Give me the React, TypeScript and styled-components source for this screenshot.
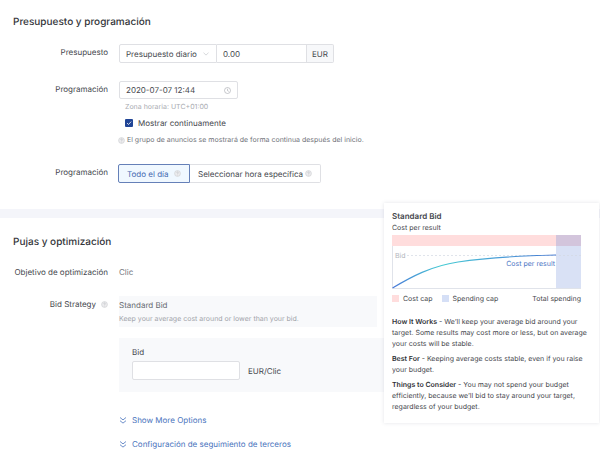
import React from "react";
import styled, { createGlobalStyle } from "styled-components";

const GlobalStyle = createGlobalStyle`
  * { box-sizing: border-box; }
  body {
    margin: 0;
    background: #fff;
    color: #45474d;
    font-family: Inter, "Noto Sans", sans-serif;
    font-size: 8px;
    line-height: 12px;
    text-rendering: geometricPrecision;
  }
  button, input, select { font: inherit; color: inherit; text-rendering: inherit; }
  h2, h3, p { margin: 0; }
`;

const Page = styled.main`
  position: relative;
`;

const Section = styled.section<{ $divided?: boolean }>`
  padding: ${(p) => (p.$divided ? "14px 0 26px" : "16px 0 7px")};
  border-bottom: ${(p) => (p.$divided ? "9px solid #f4f5fa" : "0")};
`;

const Heading = styled.h2`
  margin-left: 13px;
  font-size: 10px;
  line-height: 16px;
  font-weight: 500;
  color: #333539;
`;

const Row = styled.div<{ $gap: number }>`
  display: grid;
  grid-template-columns: 108px minmax(0, 1fr);
  column-gap: 11px;
  margin-top: ${(p) => p.$gap}px;
`;

const Label = styled.label<{ $inset?: boolean }>`
  display: flex;
  justify-content: flex-end;
  align-items: center;
  gap: 5px;
  height: 12px;
  margin-top: ${(p) => (p.$inset ? 2 : 0)}px;
  white-space: nowrap;
`;

const Group = styled.div`
  display: flex;
  height: 19px;
`;

const SelectWrap = styled.div`
  display: flex;
  align-items: center;
  width: 98px;
  padding-right: 7px;
  border: 1px solid #dfe0e4;
  border-radius: 2px 0 0 2px;
`;

const Select = styled.select`
  appearance: none;
  flex: 1;
  min-width: 0;
  height: 17px;
  padding: 0 0 0 6px;
  border: 0;
  outline: 0;
  background: transparent;
`;

const Input = styled.input<{ $width: number }>`
  width: ${(p) => p.$width}px;
  height: 19px;
  padding: 0 6px;
  border: 1px solid #dfe0e4;
  border-radius: 2px;
  outline: 0;
  background: #fff;
`;

const AmountInput = styled(Input)`
  border-left: 0;
  border-radius: 0;
`;

const Unit = styled.span`
  display: flex;
  align-items: center;
  justify-content: center;
  width: 27px;
  border: 1px solid #dfe0e4;
  border-left: 0;
  border-radius: 0 2px 2px 0;
  background: #f7f8fa;
`;

const DateField = styled.div`
  display: flex;
  align-items: center;
  justify-content: space-between;
  width: 119px;
  height: 18px;
  padding-right: 6px;
  border: 1px solid #dfe0e4;
  border-radius: 2px;
`;

const DateInput = styled.input`
  width: 90px;
  height: 16px;
  padding: 0 6px;
  border: 0;
  outline: 0;
  background: transparent;
`;

const Hint = styled.p`
  margin: 2px 0 0 6px;
  font-size: 7px;
  color: #a9abb1;
`;

const CheckLabel = styled.label`
  display: flex;
  align-items: center;
  gap: 5px;
  margin: 4px 0 0 6px;
`;

const Checkbox = styled.input`
  appearance: none;
  width: 8px;
  height: 8px;
  margin: 0;
  border-radius: 1px;
  background: #214596 url("data:image/svg+xml,%3Csvg xmlns='http://www.w3.org/2000/svg' viewBox='0 0 8 8'%3E%3Cpath d='M2 4l1.5 1.5L6.2 2.6' fill='none' stroke='white' stroke-width='.8'/%3E%3C/svg%3E");
`;

const Note = styled.p`
  display: flex;
  align-items: center;
  gap: 2px;
  margin-top: 5px;
  margin-left: -1px;
  font-size: 7px;
  color: #707279;
`;

const Segment = styled.button<{ $active?: boolean }>`
  display: flex;
  align-items: center;
  justify-content: space-between;
  width: ${(p) => (p.$active ? 72 : 131)}px;
  height: 19px;
  margin-left: ${(p) => (p.$active ? -1 : 0)}px;
  padding: 0 8px;
  white-space: nowrap;
  border: 1px solid ${(p) => (p.$active ? "#6580b8" : "#dfe0e4")};
  border-left-width: ${(p) => (p.$active ? 1 : 0)}px;
  border-radius: ${(p) => (p.$active ? "2px 0 0 2px" : "0 2px 2px 0")};
  background: ${(p) => (p.$active ? "#f0f8ff" : "#fff")};
  color: ${(p) => (p.$active ? "#4468b0" : "inherit")};
`;

const Value = styled.span`
  color: #74767d;
`;

const Strategy = styled.div`
  width: 258px;
  height: 31px;
  padding-top: 3px;
  background: #f8f9fb;
  color: #666970;
`;

const StrategyHint = styled.p`
  margin-top: 2px;
  font-size: 7px;
  color: #a2a4aa;
`;

const BidPanel = styled.div`
  margin: 11px 12px 0 119px;
  height: 54px;
  padding: 8px 13px;
  background: #f8f9fb;
`;

const BidLine = styled.div`
  display: flex;
  align-items: center;
  gap: 8px;
  margin-top: 3px;
`;

const Links = styled.nav`
  display: flex;
  flex-direction: column;
  align-items: flex-start;
  gap: 12px;
  margin: 22px 0 0 119px;
`;

const MoreLink = styled.a`
  display: flex;
  align-items: center;
  gap: 5px;
  color: #4a74bd;
  text-decoration: none;
`;

const Popover = styled.aside`
  position: absolute;
  top: 203px;
  right: 1px;
  width: 215px;
  padding: 7px 6px 11px 8px;
  background: #fff;
  box-shadow: 0 0 4px rgba(40, 50, 80, 0.13);
  font-size: 7px;
  line-height: 11px;
`;

const PopTitle = styled.h3`
  font-size: 8px;
  line-height: 12px;
  font-weight: 600;
`;

const Chart = styled.svg`
  display: block;
  width: 190px;
  height: 54px;
  margin: 2px 0 3px;
  font-size: 7px;
`;

const Legend = styled.div`
  display: flex;
  align-items: center;
  gap: 9px;
  width: 189px;
  height: 12px;
  margin-bottom: 12px;
`;

const LegendItem = styled.span<{ $color?: string }>`
  display: flex;
  align-items: center;
  gap: 4px;
  white-space: nowrap;
  &::before {
    content: "";
    width: 7px;
    height: 7px;
    background: ${(p) => p.$color};
  }
`;

const Total = styled.span`
  margin-left: auto;
  white-space: nowrap;
`;

const Paragraph = styled.p`
  margin-bottom: 4px;
  &:last-child { margin-bottom: 0; }
  strong { font-weight: 600; color: #2f3136; }
`;

const Info = () => (
  <svg width="7" height="7" viewBox="0 0 7 7" aria-hidden="true">
    <circle cx="3.5" cy="3.5" r="2.9" fill="#ececee" stroke="#d0d1d4" strokeWidth=".7" />
    <path d="M2.7 2.8c0-1.1 1.6-1.1 1.6 0 0 .6-.8.6-.8 1.2M3.5 4.7v.6" fill="none" stroke="#b8babf" strokeWidth=".6" />
  </svg>
);

const Chevron = () => (
  <svg width="6" height="4" viewBox="0 0 6 4" aria-hidden="true">
    <path d="M.5.7L3 3.1 5.5.7" fill="none" stroke="#c6c8cd" strokeWidth=".7" />
  </svg>
);

const Clock = () => (
  <svg width="7" height="7" viewBox="0 0 7 7" aria-hidden="true">
    <circle cx="3.5" cy="3.5" r="3" fill="none" stroke="#a3a5ab" strokeWidth=".6" />
    <path d="M3.5 1.7v2l1.3.7" fill="none" stroke="#a3a5ab" strokeWidth=".6" />
  </svg>
);

const DoubleChevron = () => (
  <svg width="8" height="7" viewBox="0 0 8 7" aria-hidden="true">
    <path d="M1 .5l3 2.4L7 .5M1 3.7l3 2.4 3-2.4" fill="none" stroke="#4a74bd" strokeWidth=".8" />
  </svg>
);

const BidChart = () => (
  <Chart viewBox="0 0 190 54" role="img" aria-label="Cost per result against total spending">
    <defs>
      <linearGradient id="curve" x1="0" x2="1" y1="0" y2="0">
        <stop offset="0" stopColor="#4a78d8" />
        <stop offset=".3" stopColor="#45cbd3" />
        <stop offset=".65" stopColor="#4b9ed8" />
        <stop offset="1" stopColor="#4578d0" />
      </linearGradient>
    </defs>
    <rect width="164" height="11" fill="#ffdddd" />
    <rect x="164" width="25" height="54" fill="#d9e1f5" />
    <rect x="164" width="25" height="11" fill="#d3c5dc" />
    <path d="M.5 11V53.5H189" fill="none" stroke="#e0e3ea" />
    <path d="M15 20.5H189" stroke="#d3d9e3" strokeWidth=".7" strokeDasharray="2 2" />
    <text x="3" y="23" fill="#b4b7be">Bid</text>
    <path d="M.5 53C19 42 39 31 66 27S120 21 164 20" fill="none" stroke="url(#curve)" strokeWidth="1.2" />
    <text x="163" y="31" textAnchor="end" fill="#4a74c4">Cost per result</text>
  </Chart>
);

export default function App() {
  return (
    <>
      <GlobalStyle />
      <Page>
        <Section $divided>
          <Heading>Presupuesto y programación</Heading>
          <Row $gap={14}>
            <Label htmlFor="budget" $inset>Presupuesto</Label>
            <Group>
              <SelectWrap>
                <Select aria-label="Tipo de presupuesto">
                  <option>Presupuesto diario</option>
                </Select>
                <Chevron />
              </SelectWrap>
              <AmountInput id="budget" $width={90} defaultValue="0.00" />
              <Unit>EUR</Unit>
            </Group>
          </Row>
          <Row $gap={18}>
            <Label htmlFor="start" $inset>Programación</Label>
            <div>
              <DateField>
                <DateInput id="start" defaultValue="2020-07-07 12:44" />
                <Clock />
              </DateField>
              <Hint>Zona horaria: UTC+01:00</Hint>
              <CheckLabel>
                <Checkbox type="checkbox" defaultChecked />
                Mostrar continuamente
              </CheckLabel>
              <Note>
                <Info />
                El grupo de anuncios se mostrará de forma continua después del inicio.
              </Note>
            </div>
          </Row>
          <Row $gap={18}>
            <Label as="span" $inset>Programación</Label>
            <Group>
              <Segment type="button" $active>Todo el día <Info /></Segment>
              <Segment type="button">Seleccionar hora específica <Info /></Segment>
            </Group>
          </Row>
        </Section>
        <Section>
          <Heading>Pujas y optimización</Heading>
          <Row $gap={16}>
            <Label as="span">Objetivo de optimización</Label>
            <Value>Clic</Value>
          </Row>
          <Row $gap={18}>
            <Label as="span" $inset>Bid Strategy <Info /></Label>
            <Strategy>
              Standard Bid
              <StrategyHint>Keep your average cost around or lower than your bid.</StrategyHint>
            </Strategy>
          </Row>
          <BidPanel>
            <label htmlFor="bid">Bid</label>
            <BidLine>
              <Input id="bid" $width={108} />
              <span>EUR/Clic</span>
            </BidLine>
          </BidPanel>
          <Links>
            <MoreLink href="#options"><DoubleChevron />Show More Options</MoreLink>
            <MoreLink href="#tracking"><DoubleChevron />Configuración de seguimiento de terceros</MoreLink>
          </Links>
        </Section>
        <Popover>
          <PopTitle>Standard Bid</PopTitle>
          <p>Cost per result</p>
          <BidChart />
          <Legend>
            <LegendItem $color="#ffdddd">Cost cap</LegendItem>
            <LegendItem $color="#d5dff6">Spending cap</LegendItem>
            <Total>Total spending</Total>
          </Legend>
          <Paragraph><strong>How It Works</strong> - We’ll keep your average bid around your target. Some results may cost more or less, but on average your costs will be stable.</Paragraph>
          <Paragraph><strong>Best For</strong> - Keeping average costs stable, even if you raise your budget.</Paragraph>
          <Paragraph><strong>Things to Consider</strong> - You may not spend your budget efficiently, because we’ll bid to stay around your target, regardless of your budget.</Paragraph>
        </Popover>
      </Page>
    </>
  );
}
